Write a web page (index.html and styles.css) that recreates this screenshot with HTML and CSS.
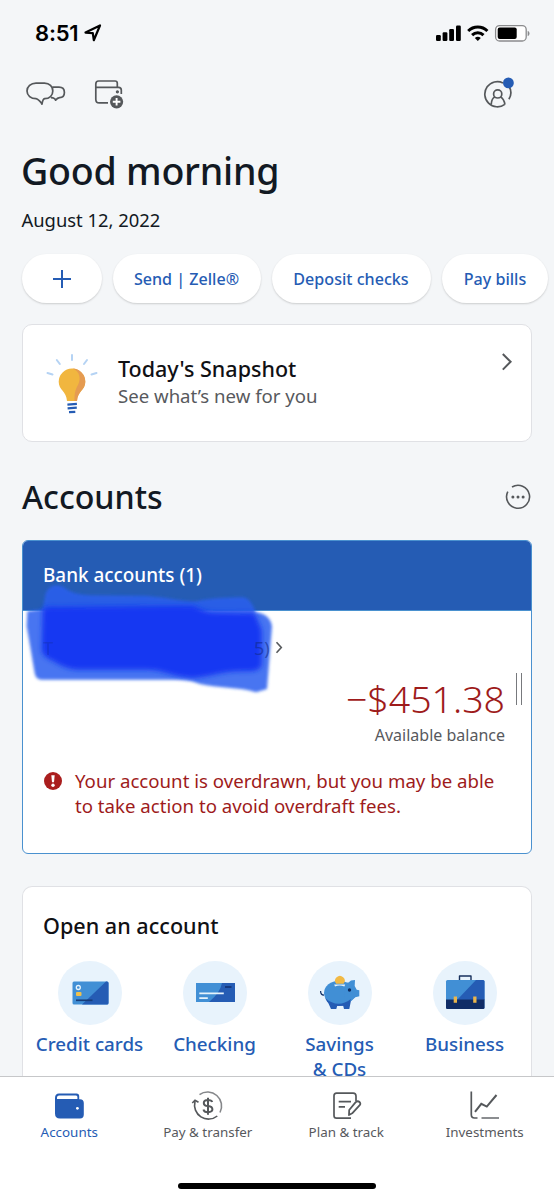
FILE: index.html
```html
<!DOCTYPE html>
<html lang="en">
<head>
<meta charset="utf-8">
<title>Accounts</title>
<link rel="stylesheet" href="styles.css">
</head>
<body>
<div class="phone">
  <header class="status">
    <div class="clock"><span>8:51</span>
      <svg width="18" height="18" viewBox="0 0 18 18"><path d="M1.5 8.6 16 1.5 9.8 16.2 8.8 9.2Z" fill="none" stroke="#000" stroke-width="2.2" stroke-linejoin="round"/></svg>
    </div>
    <svg width="96" height="20" viewBox="0 0 96 20">
      <rect x="1" y="12" width="4.8" height="6" rx="1.2"/><rect x="7.6" y="9.3" width="4.8" height="8.7" rx="1.2"/><rect x="14.2" y="6" width="4.8" height="12" rx="1.2"/><rect x="21" y="2.5" width="4.8" height="15.5" rx="1.2"/>
      <g fill="none" stroke="#000" stroke-width="3"><path d="M33.2 8a13.6 13.6 0 0 1 19.2 0"/><path d="M37.1 12.1a8.1 8.1 0 0 1 11.4 0"/></g>
      <path d="M39.8 15a4.6 4.6 0 0 1 6 0l-3 3z"/>
      <rect x="60.6" y="2.6" width="30.6" height="15.4" rx="4" fill="#fff" stroke="#8a8b8d" stroke-width="1.3"/><rect x="62.7" y="4.6" width="19" height="11.4" rx="2"/><path d="M92.7 8v5c2.4-.5 2.4-4.500 0-5z" fill="#8a8b8d"/>
    </svg>
  </header>

  <div class="tools">
    <svg width="40" height="26" viewBox="0 0 40 26" fill="none" stroke="#55585b" stroke-width="1.7" stroke-linejoin="round">
      <path d="M10 2.100H18.500C23.500 2.100 26.800 5.700 26.800 10C26.800 14.500 23.500 17.700 18.600 17.700C16.800 18 16.400 20.500 16 23.200C15.600 21.500 11.700 17.800 10 17.700C5 17.700 1 14.500 1 10C1 5.700 4.800 2.100 10 2.100Z"/>
      <path d="M26.200 6.200H33C36.500 6.200 38.400 8.500 38.400 11.400C38.400 14.400 36.500 16.500 33.600 16.700C31.600 16.900 30.900 17.500 29.600 19.200C29 17.500 28.500 17 25 16.700"/>
    </svg>
    <svg class="tool-wallet" width="32" height="32" viewBox="0 0 32 32" fill="none" stroke="#55585b" stroke-width="1.700">
      <path d="M23.300 8.200V4.200Q23.300 2 21 2H4.600Q1.800 2 1.800 5V20.400Q1.800 23.800 5.200 23.800H14M2 8.300H24.500Q27.300 8.300 27.300 11V15"/><circle cx="23.400" cy="12.800" r=".8" fill="#55585b"/>
      <circle cx="22.600" cy="22.800" r="6.600" fill="#55585b" stroke="none"/><path d="M22.600 19v7.600M18.800 22.800h7.600" stroke="#fff" stroke-width="1.900"/>
    </svg>
    <svg class="tool-profile" width="32" height="32" viewBox="0 0 32 32" fill="none" stroke="#55585b" stroke-width="1.700">
      <path d="M20 4.900A12.600 12.600 0 1 0 21.800 26.400M25.400 7.500A12.600 12.600 0 0 1 25.900 21.300"/>
      <circle cx="14.700" cy="15.900" r="4.100"/><path d="M8.200 26.500Q8.700 20 11.900 19M17.500 19Q21.100 21 21.900 26.500"/><circle cx="25.400" cy="4.900" r="5.400" fill="#255cb4" stroke="none"/>
    </svg>
  </div>

  <h1 class="greeting">Good morning</h1>
  <p class="date">August 12, 2022</p>

  <nav class="pills">
    <button class="pill pill-plus"><svg width="18" height="18" viewBox="0 0 18 18"><path d="M9 0v18M0 9h18" stroke="#255cb4" stroke-width="2"/></svg></button>
    <button class="pill pill-send">Send | Zelle®</button>
    <button class="pill pill-deposit">Deposit checks</button>
    <button class="pill pill-pay">Pay bills</button>
  </nav>

  <section class="snapshot">
    <svg width="54" height="62" viewBox="0 0 54 62">
      <g stroke="#b5d3f4" stroke-width="2" stroke-linecap="round"><path d="M27 2v5M11.800 7l3 4M42 7l-3 4M2.500 20l5 1.500M51.500 20l-5 1.500"/></g>
      <path d="M27 15.500A13.300 13.300 0 0 0 13.700 28.800C13.700 37 21.500 38.500 22 48H32C32.500 38.500 40.300 37 40.300 28.800A13.300 13.300 0 0 0 27 15.500Z" fill="#f1b63f"/>
      <path d="M27.500 15.500C35 18 36 26 33.200 31.500C29.500 38 29.500 42 29.500 48H32C32.500 38.500 40.300 37 40.300 28.800A13.300 13.300 0 0 0 27.500 15.500Z" fill="#e59b51"/>
      <path d="M22.400 51.600l9.500-.8M22.600 55.400l9.200-.8M24 59.100l6.300-.3" stroke="#255cb4" stroke-width="2.300"/>
    </svg>
    <div class="snapshot-text"><h2>Today's Snapshot</h2><p>See what’s new for you</p></div>
    <svg class="chevron" width="12" height="20" viewBox="0 0 12 20"><path d="M1.800 2 9.600 9.800 1.800 17.600" fill="none" stroke="#55585b" stroke-width="2"/></svg>
  </section>

  <div class="section-head"><h2>Accounts</h2>
    <svg width="26" height="26" viewBox="0 0 26 26"><path d="M7 3A11.500 11.500 0 1 1 2.800 7.600" fill="none" stroke="#55585b" stroke-width="1.600"/><g fill="#55585b"><circle cx="7.900" cy="13" r="1.500"/><circle cx="13" cy="13" r="1.500"/><circle cx="18.100" cy="13" r="1.500"/></g></svg>
  </div>

  <section class="bank">
    <h3>Bank accounts (1)</h3>
    <div class="account-name"><span class="first">T</span><span>5)</span>
      <svg width="8" height="13" viewBox="0 0 8 13"><path d="M1.500 1.300 6.300 6.500 1.500 11.700" fill="none" stroke="#55585b" stroke-width="1.600"/></svg>
    </div>
    <div class="balance">
      <div class="figures"><strong>−$451.38</strong><span>Available balance</span></div>
      <i class="handle"></i>
    </div>
    <div class="alert">
      <svg width="18" height="18" viewBox="0 0 18 18"><circle cx="9" cy="9" r="9" fill="#aa1e1e"/><path d="M7.300 3.200h3.400L10 10.200H8z" fill="#fff"/><circle cx="9" cy="13.200" r="1.700" fill="#fff"/></svg>
      <p>Your account is overdrawn, but you may be able<br>to take action to avoid overdraft fees.</p>
    </div>
    <svg class="scribble" width="260" height="114" viewBox="60 160 780 342">
      <defs><filter id="soft"><feGaussianBlur stdDeviation="5"/></filter><filter id="softer"><feGaussianBlur stdDeviation="8"/></filter></defs>
      <path d="M82 245L128 238L137 190Q155 155 190 172Q215 195 270 197L430 198C510 203 540 215 590 215C630 205 690 203 730 203Q752 205 767 248Q810 253 816 290L801 478L768 488C720 472 650 475 600 463C570 450 550 450 500 450H125Q107 450 104 430L80 290Z" fill="#285fef" fill-opacity=".86" filter="url(#soft)"/>
      <path d="M128 238Q140 230 170 232L580 228Q610 245 640 248L764 250L785 300V405Q780 426 740 425C670 422 640 440 580 445C510 440 500 422 440 420H230Q200 420 160 395Q125 380 125 360Z" fill="#1639f2" filter="url(#softer)"/>
    </svg>
  </section>

  <section class="open">
    <h3>Open an account</h3>
    <div class="products">
      <a class="product"><span class="disc"><svg width="64" height="64" viewBox="0 0 64 64">
        <rect x="14.500" y="20.500" width="36" height="23" rx="1.500" fill="#418fd5"/><path d="M48 20.500h1q1.500 0 1.500 1.500v20q0 1.500-1.500 1.500H24z" fill="#255cb4"/><circle cx="20.300" cy="26.500" r="2" fill="none" stroke="#e6f3fc" stroke-width="1.300"/><rect x="18" y="31" width="5.500" height="4" rx="1" fill="#f1c14c"/><path d="M18 39.300h16.500" stroke="#173c78" stroke-width="1.700"/></svg></span>Credit cards</a>
      <a class="product"><span class="disc"><svg width="64" height="64" viewBox="0 0 64 64">
        <path d="M13 22h39v19H13z" fill="#418fd5"/><path d="M39 22h13v19H26q11-9 13-19z" fill="#255cb4"/><path d="M42 26h6.500" stroke="#123275" stroke-width="1.700"/><path d="M16.300 32.400h24.500M16.300 37.200h8.500" stroke="#e6f3fc" stroke-width="1.800"/></svg></span>Checking</a>
      <a class="product"><span class="disc"><svg width="64" height="64" viewBox="0 0 64 64">
        <path d="M18 37l5 11h5.300l.9-3.200h6L36 48h5.300l1.700-8.600L47 36H18z" fill="#255cb4"/><ellipse cx="31" cy="32" rx="15" ry="12.200" fill="#418fd5"/><path d="M37 22q4 0 6-2.500l4-.5-.3 6 2 3.800 2.600.5v6l-4 1-4 3.700H36z" fill="#418fd5"/><path d="M17 37Q30 48 43 38Q42 45 31 45T17 37z" fill="#255cb4"/><path d="M16 34.200Q12.500 34 12.600 30" fill="none" stroke="#0b2a60" stroke-width="1.200"/><path d="M26.200 23.500h11l-.8 2Q31.500 23.500 27 25.500z" fill="#e6f3fc"/><path d="M28.200 22.800A4.800 4.800 0 1 1 35.600 22.800z" fill="#f1b945"/><circle cx="41.500" cy="29" r="1.700" fill="#0b2a60"/></svg></span>Savings<br>&amp; CDs</a>
      <a class="product"><span class="disc"><svg width="64" height="64" viewBox="0 0 64 64">
        <path d="M26.500 20v-5h11.500v5" fill="none" stroke="#17305c" stroke-width="1.400" stroke-linejoin="round"/><rect x="13" y="19" width="38.500" height="29" rx="1.500" fill="#418fd5"/><path d="M43 19h7q1.500 0 1.500 1.500V39H24z" fill="#255cb4"/><path d="M13 38.500h38.500v8q0 1.500-1.500 1.500H14.500q-1.500 0-1.500-1.500z" fill="#102c66"/><path d="M20.700 35.500h3.300v6.300h-3.300zM40.200 35.500h3.300v6.300h-3.300z" fill="#e9b54d"/></svg></span>Business</a>
    </div>
  </section>

  <nav class="tabs">
    <a class="tab active"><svg width="34" height="32" viewBox="0 0 34 32"><path d="M3 8Q3 3.500 7 3.500H24.500Q27.200 3.500 27.200 6.200V9.200H28Q31.800 9.200 31.800 13V24.500Q31.800 28.500 28 28.500H8Q3 28.500 3 23.500Z" fill="#255cb4"/><path d="M5 8.800Q4.600 5.400 7.500 5.400H24Q25.400 5.400 25.400 7V9H5z" fill="#fff"/><circle cx="25.400" cy="18.300" r="1.400" fill="#fff"/></svg>Accounts</a>
    <a class="tab"><svg width="34" height="32" viewBox="0 0 34 32" fill="none" stroke="#55585b" stroke-width="1.600"><path d="M8.500 4.600A14 14 0 0 1 29 22.500" stroke="#85878a"/><path d="M26.300 26A14 14 0 0 1 4 11.500M1.300 13 4 10.300 7.500 12.300"/><path d="M21.200 12Q20.500 10 17 10Q12.800 10 12.800 12.900T17 16Q21.400 16.500 21.400 19.300T17 22.200Q13 22.200 12.500 19.500M17 7.700v17" stroke-width="2"/></svg>Pay &amp; transfer</a>
    <a class="tab"><svg width="34" height="32" viewBox="0 0 34 32" fill="none" stroke="#55585b" stroke-width="1.700"><path d="M27 11V6Q27 3.200 24.200 3.200H7.500Q5 3.200 5 5.700V25.500Q5 28.200 7.500 28.200H22"/><path d="M9.700 11.600H22M9.700 16.800H16"/><path d="M26.700 12.200Q28.800 10.300 30.500 12T30.500 15.400L23.200 23.300 20 25 20.200 20Z" stroke-width="1.800" stroke-linejoin="round"/></svg>Plan &amp; track</a>
    <a class="tab"><svg width="34" height="32" viewBox="0 0 34 32" fill="none" stroke="#55585b" stroke-width="1.700"><path d="M3.300 1.500V24.500Q3.300 28 6.500 28H9.500"/><path d="M13.500 28H31" stroke="#77797c"/><path d="M7 21.800 13.300 13.800 18.800 16.600 28.500 5" stroke-width="2"/></svg>Investments</a>
    <div class="home-bar"></div>
  </nav>
</div>
</body>
</html>
```
FILE: styles.css
```css
* { box-sizing: border-box; }
body { margin: 0; background: #f4f6f8; font-family: "Noto Sans", "Open Sans", sans-serif; color: #121923; }
h1, h2, h3, p { margin: 0; font-weight: 500; }
svg { display: block; flex: none; overflow: visible; }
.phone { width: 554px; height: 1200px; display: flex; flex-direction: column; overflow: hidden; white-space: nowrap; }
.phone > * { flex: none; }

.status { height: 66px; display: flex; justify-content: space-between; align-items: center; padding: 0 23px 0 35px; }
.clock { display: flex; align-items: center; gap: 6px; font: 600 22px/30px Inter, sans-serif; color: #000; letter-spacing: -.2px; }

.tools { height: 74px; display: flex; align-items: flex-start; padding: 12px 39px 0 26px; }
.tools > svg:first-child { margin-top: 3px; }
.tool-wallet { margin-top: 1px; margin-left: 28px; }
.tool-profile { margin-left: auto; }

.greeting { height: 61px; padding-left: 21px; font-size: 37.6px; line-height: 61px; font-weight: 540; letter-spacing: -.25px; }
.date { height: 53px; padding-left: 21.500px; font-size: 18.4px; line-height: 37px; font-weight: 400; }

.pills { height: 70px; display: flex; gap: 11px; padding-left: 22px; }
.pill { height: 49px; border: 0; border-radius: 25px; padding: 2px 0 0; background: #fff; color: #255cb4; font: 500 16.1px/47px "Noto Sans", sans-serif; box-shadow: 0 1px 2px rgba(0, 0, 0, .17); display: flex; justify-content: center; align-items: center; flex: none; }
.pill-plus { width: 80px; padding: 0 1px 0 0; }
.pill-send { width: 148px; padding-right: 1px; }
.pill-deposit { width: 159px; padding-right: 1px; }
.pill-pay { width: 106px; }

.snapshot { height: 118px; margin: 0 22px; border: 1px solid #e0e1e5; border-radius: 10px; background: #fff; display: flex; padding: 28px 18px 0 22px; }
.snapshot-text { margin-left: 19px; }
.snapshot-text h2 { font-size: 21.5px; line-height: 31px; color: #101014; }
.snapshot-text p { margin-top: -1px; font-size: 18.6px; line-height: 25px; font-weight: 400; color: #57595d; }
.chevron { margin: -1px 0 0 auto; }

.section-head { height: 98px; display: flex; justify-content: space-between; align-items: center; padding: 11px 23px 0 22px; }
.section-head h2 { font-size: 32.2px; line-height: 40px; }

.bank { position: relative; height: 314px; margin: 0 22px; border: 1px solid #4a91cf; border-radius: 6px; background: #fff; display: flex; flex-direction: column; }
.bank h3 { height: 70px; padding-left: 20px; border-radius: 5px 5px 0 0; background: #255cb4; border-bottom: 1px solid #4a91cf; color: #fff; font-size: 18.9px; line-height: 69px; }
.account-name { height: 64px; padding: 9px 0 0 20px; display: flex; align-items: center; font-size: 18px; color: rgba(17, 42, 140, .6); }
.account-name span { position: relative; z-index: 2; }
.account-name .first { width: 211px; opacity: .45; }
.account-name svg { margin-left: 5px; }
.balance { height: 84px; display: flex; justify-content: flex-end; padding-right: 9px; }
.figures { display: flex; flex-direction: column; align-items: flex-end; margin-right: 11px; }
.figures strong { font-size: 37.5px; line-height: 48px; font-weight: 300; color: #9e1b1b; }
.figures span { font-size: 16px; line-height: 24px; color: #57595d; }
.handle { width: 6px; height: 32px; margin-top: -2px; border: solid #77797d; border-width: 0 1px; }
.alert { display: flex; gap: 13px; padding: 9px 0 0 21px; color: #9e1b1b; }
.alert svg { margin-top: 4px; }
.alert p { font-size: 18.65px; line-height: 25px; font-weight: 400; }
.scribble { position: absolute; left: -3px; top: 42px; }

.open { height: 190px; margin: 32px 22px 0; border: 1px solid #e0e1e5; border-bottom: 0; border-radius: 10px 10px 0 0; background: #fff; display: flow-root; }
.open h3 { padding-left: 20px; font-size: 21.6px; line-height: 32px; margin-top: 23px; color: #101014; }
.products { display: grid; grid-template-columns: repeat(4, 125px); margin: 19px 0 0 4px; }
.product { display: flex; flex-direction: column; align-items: center; color: #255cb4; font-size: 18.8px; line-height: 25px; font-weight: 500; text-align: center; }
.disc { width: 64px; height: 64px; margin-bottom: 7px; border-radius: 50%; background: #e8f3fc; }

.tabs { position: relative; height: 124px; border-top: 1px solid #c6c7c9; background: #fff; display: grid; grid-template-columns: repeat(4, 138.500px); grid-template-rows: 106px 6px; }
.tab { display: flex; flex-direction: column; align-items: center; padding-top: 13px; font-size: 13.400px; line-height: 20px; color: #57595d; }
.tab.active { color: #255cb4; }
.home-bar { grid-column: 1 / -1; justify-self: center; width: 198px; height: 6px; border-radius: 3px; background: #000; }
```
